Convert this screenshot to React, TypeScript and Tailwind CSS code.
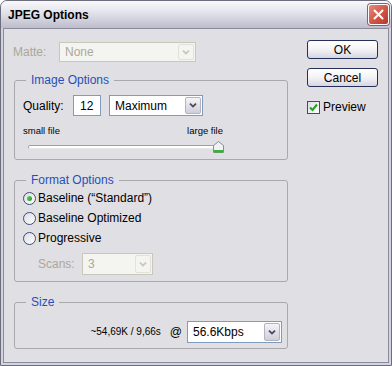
import React from "react";

const Chevron = ({ color = "#4a4a5a" }: { color?: string }) => (
  <svg width="8" height="5" viewBox="0 0 8 5">
    <path d="M1 0.6 L4 3.6 L7 0.6" stroke={color} strokeWidth="1.8" fill="none" />
  </svg>
);

interface ComboProps {
  text: string;
  className: string;
  disabled?: boolean;
}

const Combo: React.FC<ComboProps> = ({ text, className, disabled }) => (
  <div
    className={`flex items-stretch border ${
      disabled ? "border-[#c9c7ba] bg-[#f4f4f1]" : "border-[#7f9db9] bg-white"
    } ${className}`}
  >
    <div
      className={`flex-1 flex items-center pl-[5px] ${
        disabled ? "text-[#aca899]" : "text-black"
      }`}
    >
      {text}
    </div>
    <div
      className={`w-[16px] m-px flex items-center justify-center rounded-[2px] border ${
        disabled
          ? "border-[#e2e1da] bg-[#f4f4f1]"
          : "border-[#b3b3c3] bg-gradient-to-b from-[#f4f4f8] to-[#cfcfda]"
      }`}
    >
      <Chevron color={disabled ? "#c9c7ba" : "#4a4a5a"} />
    </div>
  </div>
);

const Radio = ({ checked, label }: { checked?: boolean; label: string }) => (
  <div className="h-[20px] flex items-center">
    <div className="w-[13px] h-[13px] rounded-full border border-[#3a4d78] bg-gradient-to-br from-[#dcdce4] to-white flex items-center justify-center">
      {checked && (
        <div className="w-[5px] h-[5px] rounded-full bg-gradient-to-br from-[#62d162] to-[#1f9a1f]" />
      )}
    </div>
    <span className="ml-[2px]">{label}</span>
  </div>
);

const Group = ({
  title,
  className,
  children,
}: {
  title: string;
  className: string;
  children: React.ReactNode;
}) => (
  <fieldset className={`border border-[#a9a8ad] rounded-[3px] ${className}`}>
    <legend className="ml-[11px] px-[5px] text-[#1f50bd] leading-[14px]">{title}</legend>
    {children}
  </fieldset>
);

const XpButton = ({ label }: { label: string }) => (
  <div className="w-[71px] h-[19px] flex items-center justify-center rounded-[3px] border border-[#25305a] bg-gradient-to-b from-white via-[#f3f3f6] to-[#d6d6e0] text-black">
    {label}
  </div>
);

export default function App() {
  return (
    <div className="w-[392px] h-[366px] flex flex-col font-['Liberation_Sans',Arial,sans-serif] text-[12px] leading-[14px] bg-[#d3d3dd] border border-[#6d6d80] rounded-t-[7px] overflow-hidden">
      {/* title bar */}
      <div className="h-[27px] shrink-0 flex items-center justify-between pl-[7px] pr-[2px] bg-gradient-to-b from-[#fafafc] via-[#dedee7] to-[#bdbdcc]">
        <span className="font-bold text-black">JPEG Options</span>
        <div className="w-[21px] h-[21px] rounded-[3px] border border-white bg-gradient-to-br from-[#e48b7d] via-[#d2584a] to-[#b5382c] flex items-center justify-center shadow-[0_0_0_1px_#a05a55]">
          <svg width="11" height="11" viewBox="0 0 11 11">
            <path d="M1.5 1.5 L9.5 9.5 M9.5 1.5 L1.5 9.5" stroke="white" strokeWidth="2" strokeLinecap="round" />
          </svg>
        </div>
      </div>

      {/* body */}
      <div className="flex-1 flex mx-[2px] mb-[2px] border border-[#8b8b9d] bg-[#e0dfe3]">
        <div className="w-[284px] pl-[10px] flex flex-col">
          <div className="mt-[13px] -ml-[1px] h-[20px] flex items-center">
            <span className="w-[46px] text-[#aca899]">Matte:</span>
            <Combo text="None" disabled className="w-[137px] h-[20px]" />
          </div>

          <Group title="Image Options" className="mt-[11px] pb-[6px]">
            <div className="mt-[8px] pl-[8px] h-[21px] flex items-center">
              <span className="w-[50px]">Quality:</span>
              <div className="w-[28px] h-[21px] border border-[#7f9db9] bg-white flex items-center pl-[6px]">12</div>
              <Combo text="Maximum" className="ml-[8px] w-[94px] h-[21px]" />
            </div>
            <div className="mt-[8px] ml-[8px] w-[200px] flex justify-between text-[9.5px] leading-[14px]">
              <span>small file</span>
              <span>large file</span>
            </div>
            <div className="mt-[3px] ml-[13px] w-[200px] h-[12px] flex items-center relative">
              <div className="w-[192px] h-[4px] border border-[#a2a19d] border-b-[#e8e8e8] rounded-[2px] bg-white" />
              <svg className="absolute left-[185px] top-0" width="11" height="12" viewBox="0 0 11 12">
                <path d="M0.5 4.5 L5.5 0.5 L10.5 4.5 L10.5 11.5 L0.5 11.5 Z" fill="#f1f1f4" stroke="#8a8a96" />
                <rect x="1" y="9" width="9" height="2.5" fill="#35b335" />
              </svg>
            </div>
          </Group>

          <Group title="Format Options" className="mt-[13px] pb-[6px]">
            <div className="mt-[1px] pl-[8px] flex flex-col">
              <Radio checked label={"Baseline (\u201cStandard\u201d)"} />
              <Radio label="Baseline Optimized" />
              <Radio label="Progressive" />
            </div>
            <div className="mt-[5px] pl-[23px] h-[22px] flex items-center">
              <span className="w-[44px] text-[#aca899]">Scans:</span>
              <Combo text="3" disabled className="w-[71px] h-[22px]" />
            </div>
          </Group>

          <Group title="Size" className="mt-[13px] pb-[5px]">
            <div className="mt-[12px] pr-[5px] h-[22px] flex items-center justify-end">
              <span className="text-[10px]">~54,69K / 9,66s</span>
              <span className="ml-[9px] mr-[5px]">@</span>
              <Combo text="56.6Kbps" className="w-[95px] h-[22px]" />
            </div>
          </Group>
        </div>

        {/* right column */}
        <div className="ml-[19px] flex flex-col">
          <div className="mt-[11px]">
            <XpButton label="OK" />
          </div>
          <div className="mt-[9px]">
            <XpButton label="Cancel" />
          </div>
          <div className="mt-[13px] h-[14px] flex items-center">
            <div className="w-[13px] h-[13px] border border-[#3a4d78] bg-gradient-to-br from-[#dcdce4] to-white flex items-center justify-center">
              <svg width="9" height="9" viewBox="0 0 9 9">
                <path d="M1 4.5 L3.5 7 L8 1.5" stroke="#21a121" strokeWidth="2" fill="none" />
              </svg>
            </div>
            <span className="ml-[3px]">Preview</span>
          </div>
        </div>
      </div>
    </div>
  );
}
